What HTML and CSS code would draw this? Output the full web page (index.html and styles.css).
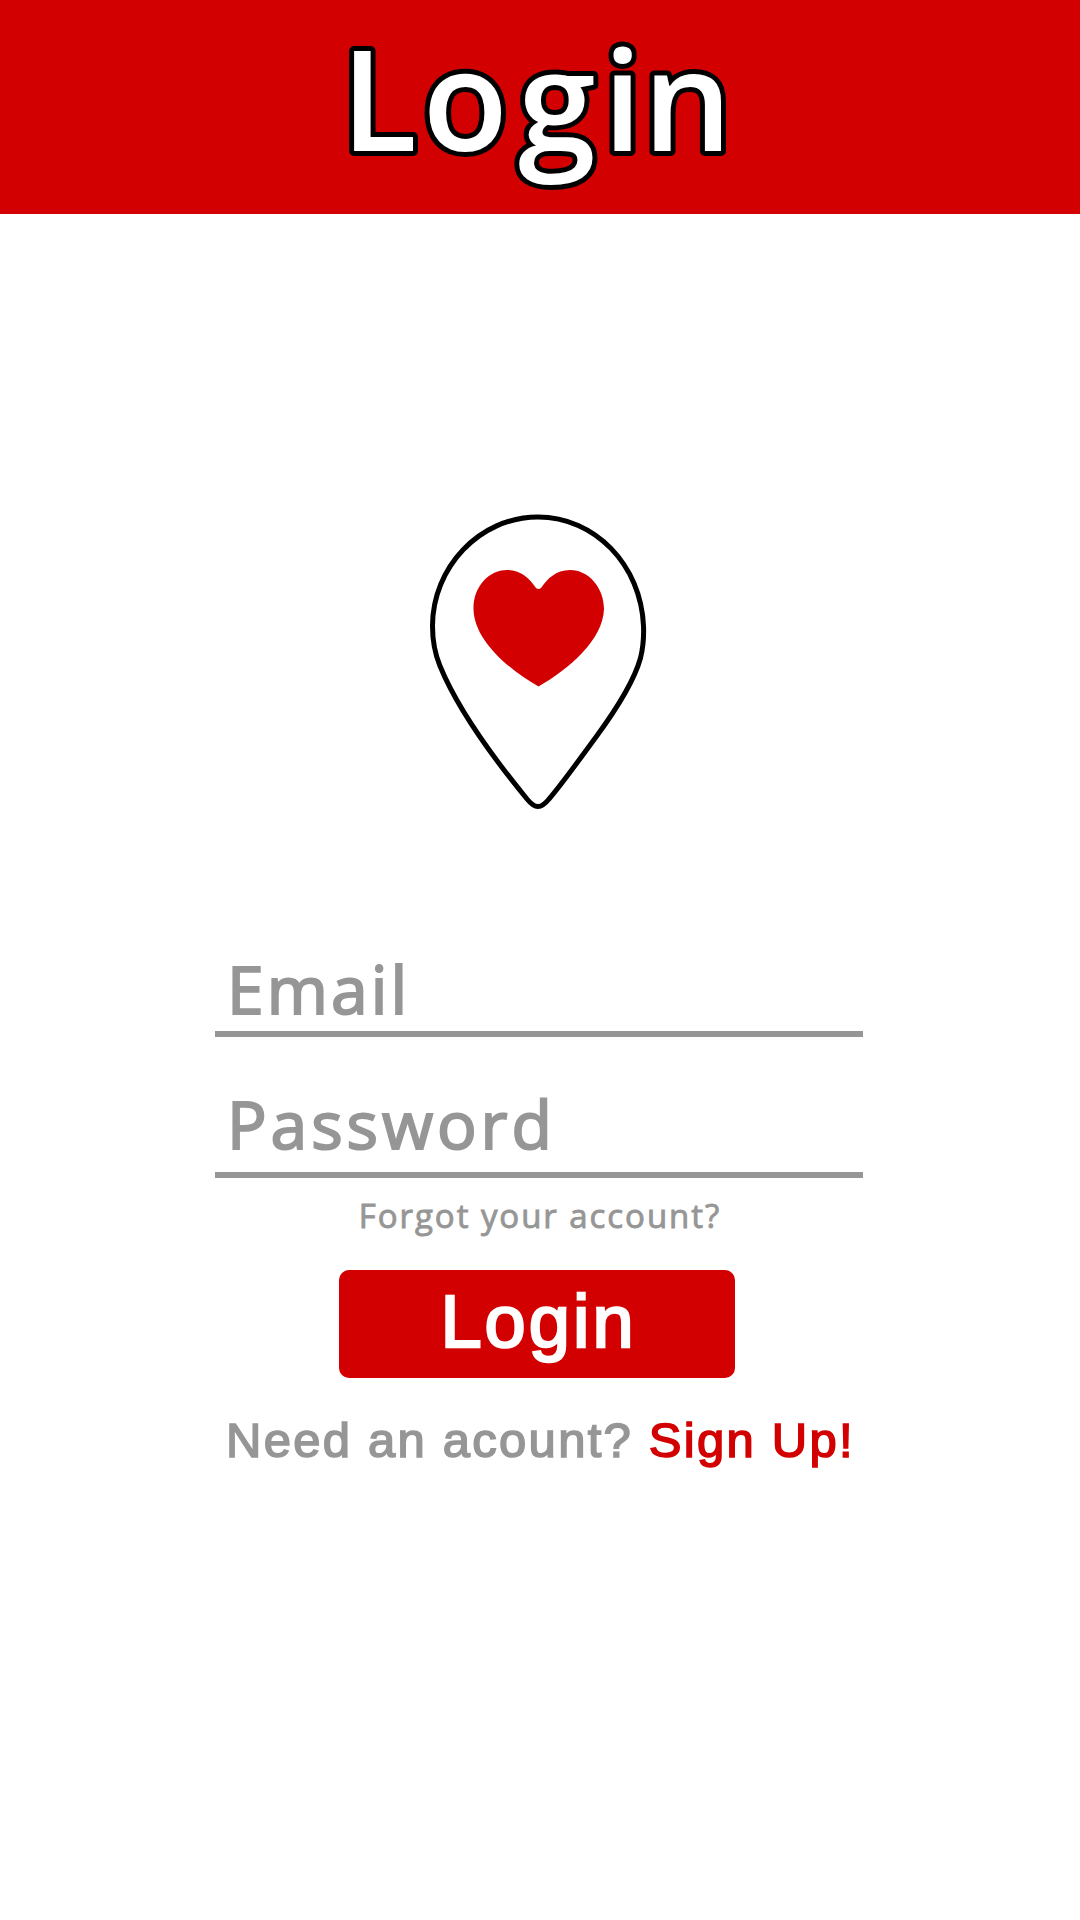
FILE: index.html
```html
<!DOCTYPE html>
<html lang="en">
<head>
<meta charset="utf-8">
<title>Login</title>
<link rel="stylesheet" href="styles.css">
</head>
<body>
<header class="header">
  <svg class="title" width="1080" height="214" viewBox="0 0 1080 214" role="heading" aria-level="1">
    <text x="341 422.500 518 603 643" y="151">Login</text>
  </svg>
</header>
<main class="main">
  <svg class="pin" width="220" height="300" viewBox="0 0 220 300" aria-hidden="true">
    <path class="pin-outline" d="M108 3C49 3 2.500 54 2.500 112C2.500 126 5 140 10 152C28 196 65 246 97 285C105 295 111 295 119 285C132 270 149 246 166 223C188 193 205 164 210.500 144C213 134 214 124 213.500 112C211 51 165 3 108 3Z"/>
    <path class="pin-heart" d="M108.500 172.500C78 155 44 126 43.500 95C43 74 58 56 77 56C91 56 100 65 106 74Q108.500 76 111 74C117 65 126 56 140 56C159 56 174 74 174 95C173 126 139 155 108.500 172.500Z"/>
  </svg>
  <form class="form">
    <label class="field email">Email</label>
    <label class="field password">Password</label>
    <a class="forgot">Forgot your account?</a>
    <button class="submit" type="button">Login</button>
    <p class="signup">Need an acount? <a class="signup-link">Sign Up!</a></p>
  </form>
</main>
</body>
</html>
```
FILE: styles.css
```css
* { box-sizing: border-box; }
body { margin: 0; background: #fff; font-family: "Open Sans", sans-serif; color: #969696; }
.header { height: 214px; background: #d20000; }
.title { display: block; font-size: 140px; font-weight: 600; fill: #fff; stroke: #000; stroke-width: 10px; stroke-linejoin: round; paint-order: stroke fill; }
.main { display: flex; flex-direction: column; align-items: center; padding-top: 300px; }
.pin { display: block; }
.pin-outline { fill: none; stroke: #000; stroke-width: 5; }
.pin-heart { fill: #d20000; }
.form { display: flex; flex-direction: column; width: 648px; margin: 134px 2px 0 0; }
.field { font-size: 66px; line-height: 80px; padding-left: 12px; border-bottom: 6px solid #969696; white-space: nowrap; -webkit-text-stroke: 2px #969696; }
.email { padding-bottom: 3px; letter-spacing: 3.1px; }
.password { margin-top: 46px; padding-bottom: 9px; letter-spacing: 3.9px; }
.forgot { margin-top: 18px; padding-left: 2px; text-align: center; font-size: 33px; line-height: 40px; letter-spacing: 1.95px; -webkit-text-stroke: 0.9px #969696; }
.submit { margin: 34px 0 0 124px; width: 396px; height: 108px; padding: 0 0 5px 3px; border: 0; border-radius: 10px; background: #d20000; color: #fff; font: 74px/103px "Liberation Sans", sans-serif; letter-spacing: 3px; -webkit-text-stroke: 2.5px #fff; }
.signup { margin: 32px 0 0 11px; white-space: nowrap; font: 49px/60px "Liberation Sans", sans-serif; letter-spacing: 2.25px; -webkit-text-stroke: 1.6px currentColor; }
.signup-link { color: #d20000; }
```
